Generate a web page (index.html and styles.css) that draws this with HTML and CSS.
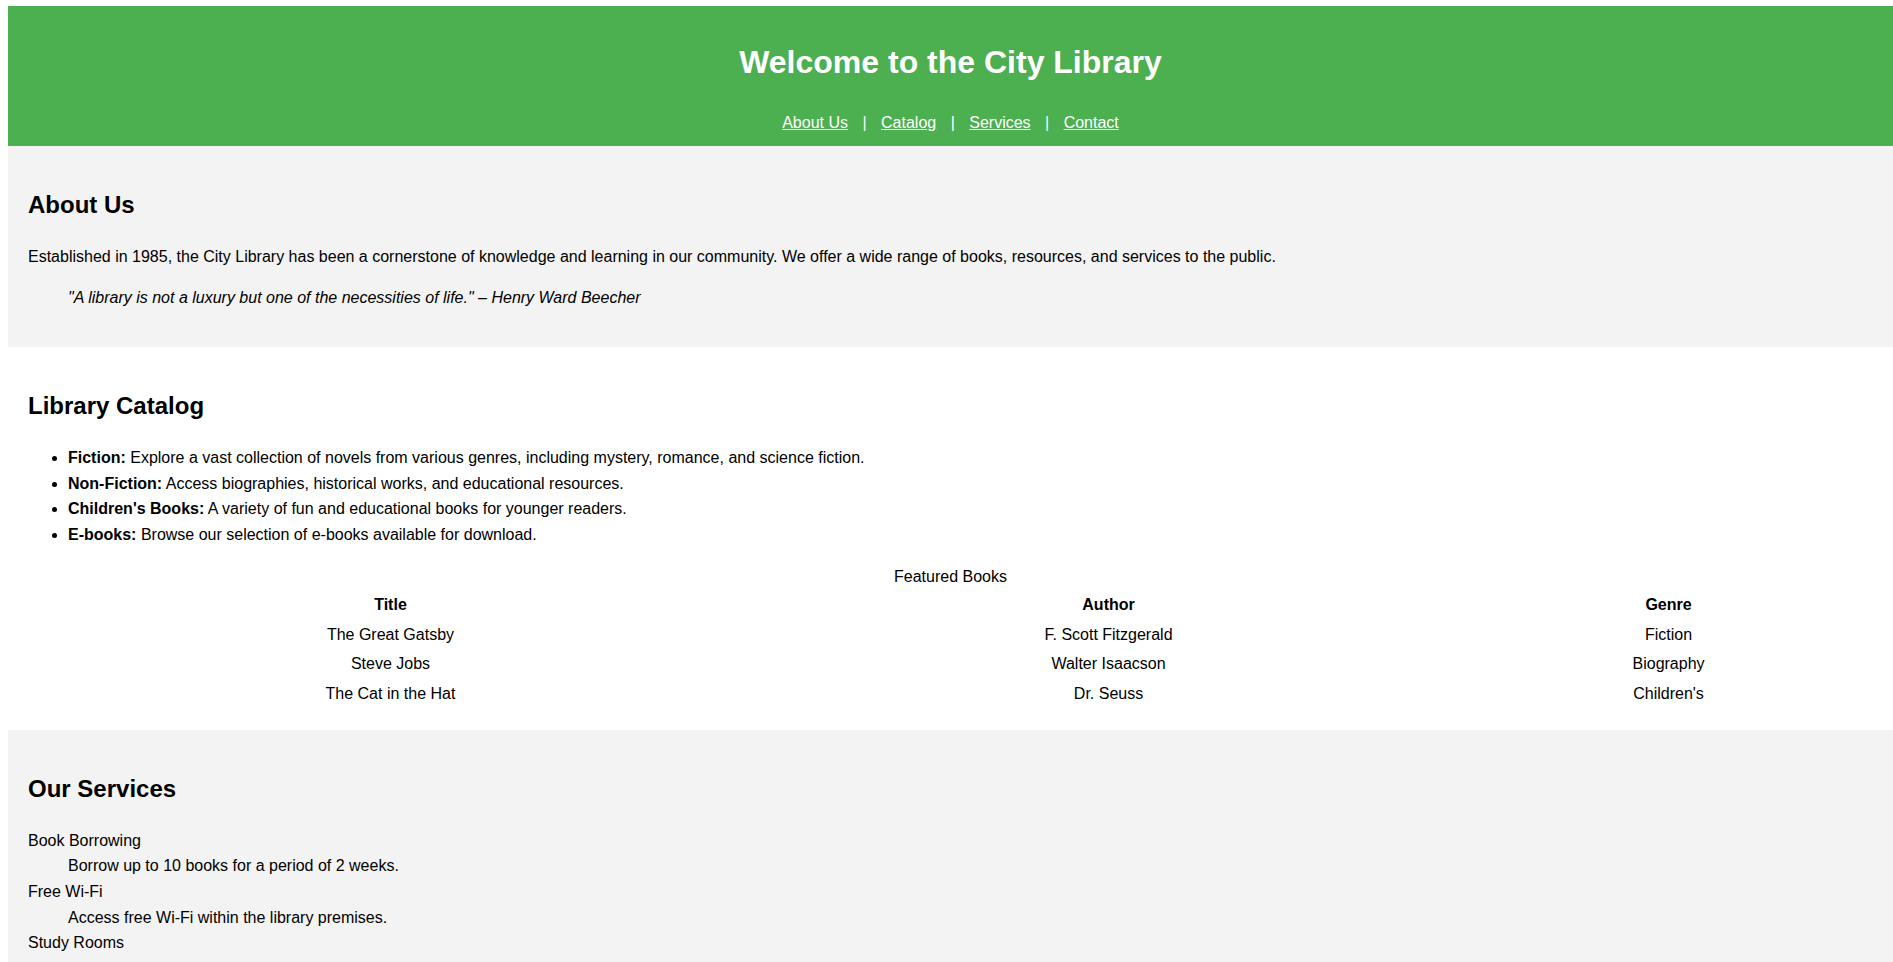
FILE: index.html
```html
<!DOCTYPE html>
<html lang="en">
<head>
<meta charset="utf-8">
<title>City Library</title>
<link rel="stylesheet" href="styles.css">
</head>
<body>
<header class="site-header">
  <h1 class="site-title">Welcome to the City Library</h1>
  <nav class="site-nav">
    <a href="#about">About Us</a> | <a href="#catalog">Catalog</a> | <a href="#services">Services</a> | <a href="#contact">Contact</a>
  </nav>
</header>

<section id="about" class="section section-alt">
  <h2>About Us</h2>
  <p>Established in 1985, the City Library has been a cornerstone of knowledge and learning in our community. We offer a wide range of books, resources, and services to the public.</p>
  <blockquote class="quote">"A library is not a luxury but one of the necessities of life." – Henry Ward Beecher</blockquote>
</section>

<section id="catalog" class="section">
  <h2>Library Catalog</h2>
  <ul class="catalog-list">
    <li><strong>Fiction:</strong> Explore a vast collection of novels from various genres, including mystery, romance, and science fiction.</li>
    <li><strong>Non-Fiction:</strong> Access biographies, historical works, and educational resources.</li>
    <li><strong>Children's Books:</strong> A variety of fun and educational books for younger readers.</li>
    <li><strong>E-books:</strong> Browse our selection of e-books available for download.</li>
  </ul>
  <table class="books">
    <caption>Featured Books</caption>
    <thead>
      <tr><th>Title</th><th>Author</th><th>Genre</th></tr>
    </thead>
    <tbody>
      <tr><td>The Great Gatsby</td><td>F. Scott Fitzgerald</td><td>Fiction</td></tr>
      <tr><td>Steve Jobs</td><td>Walter Isaacson</td><td>Biography</td></tr>
      <tr><td>The Cat in the Hat</td><td>Dr. Seuss</td><td>Children's</td></tr>
    </tbody>
  </table>
</section>

<section id="services" class="section section-alt">
  <h2>Our Services</h2>
  <dl class="services-list">
    <dt>Book Borrowing</dt>
    <dd>Borrow up to 10 books for a period of 2 weeks.</dd>
    <dt>Free Wi-Fi</dt>
    <dd>Access free Wi-Fi within the library premises.</dd>
    <dt>Study Rooms</dt>
    <dd>Reserve private study rooms for individual or group study.</dd>
  </dl>
</section>

<section id="contact" class="section">
  <h2>Contact Us</h2>
  <p>Visit us at 123 Main Street, or call (555) 123-4567.</p>
</section>
</body>
</html>
```

FILE: styles.css
```css
html {
  background: #ffffff;
}

body {
  margin: 6px 0 0 8px;
  font-family: "Liberation Sans", Arial, sans-serif;
  line-height: 1.6;
  color: #000000;
}

.site-header {
  background-color: #4caf50;
  color: #ffffff;
  text-align: center;
  padding: 10px 0;
}

.site-title {
  font-size: 32px;
  margin: 21.44px 0;
}

.site-nav a {
  color: #ffffff;
  margin: 0 10px;
}

.section {
  padding: 20px;
}

.section-alt {
  background-color: #f3f3f3;
}

.section h2 {
  font-size: 24px;
  margin: 19.92px 0;
}

.quote {
  font-style: italic;
}

.books {
  width: 100%;
}

.books th,
.books td {
  text-align: center;
}
```
